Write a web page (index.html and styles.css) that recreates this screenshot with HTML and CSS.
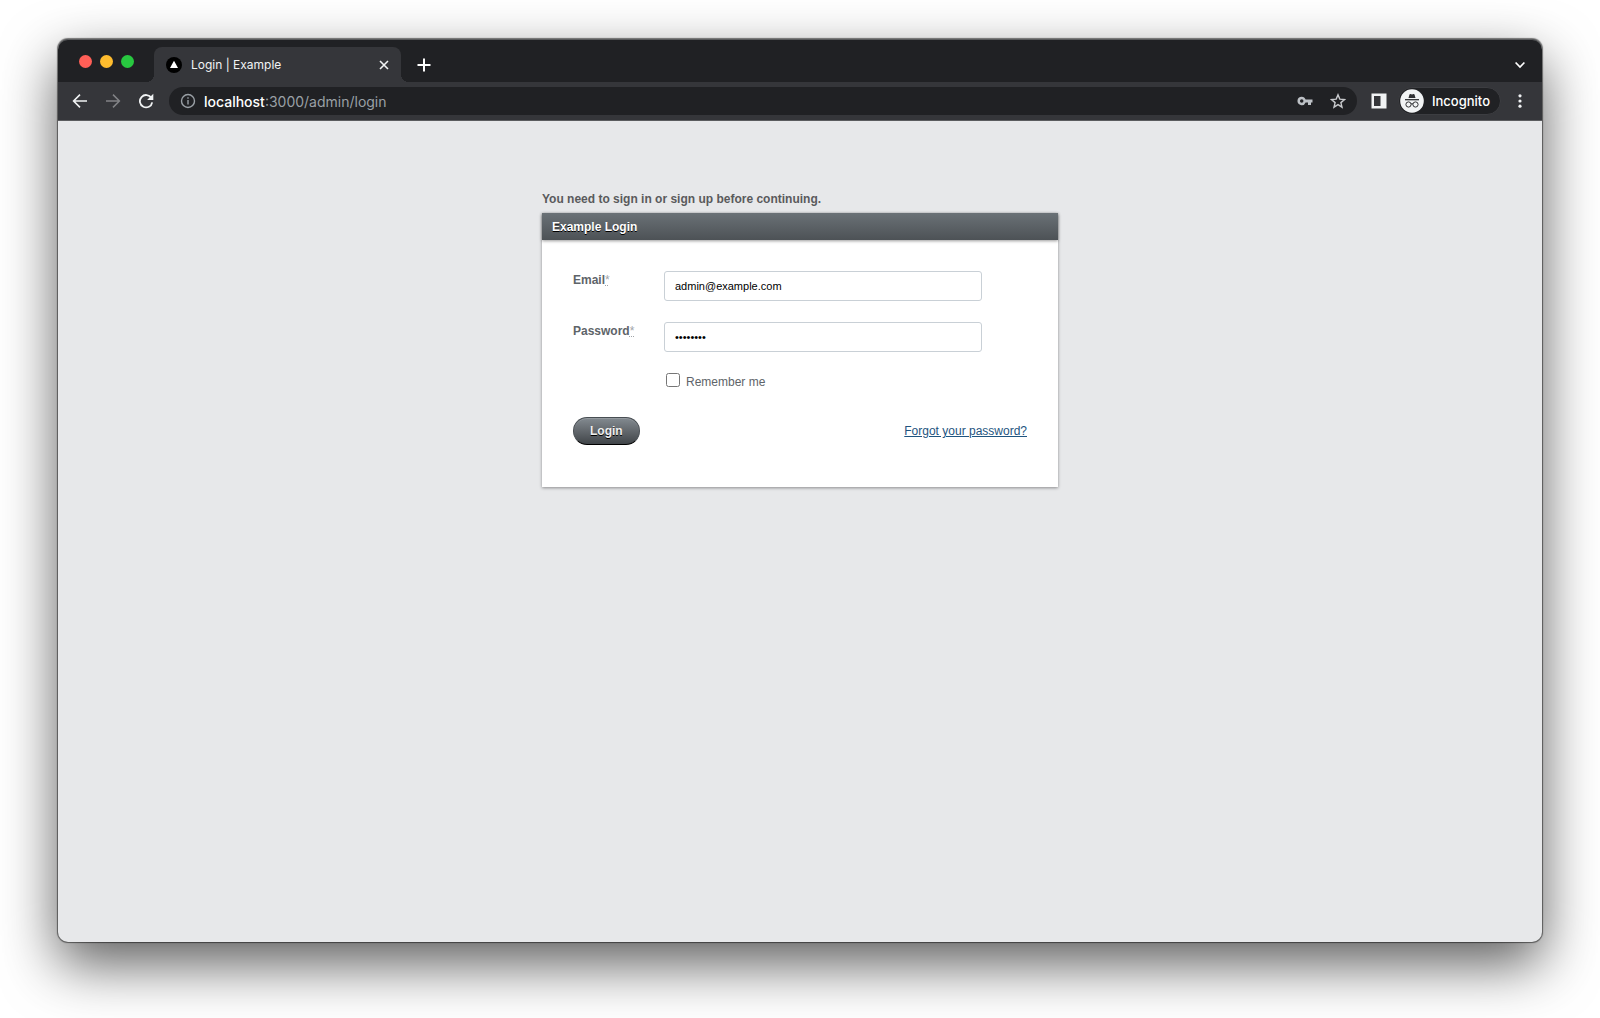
FILE: index.html
```html
<!DOCTYPE html>
<html lang="en">
<head>
<meta charset="utf-8">
<title>Login | Example</title>
<link rel="stylesheet" href="styles.css">
</head>
<body>
<div class="window">
  <header class="chrome">
    <div class="tabstrip">
      <div class="lights">
        <span class="light light-close"></span>
        <span class="light light-minimize"></span>
        <span class="light light-zoom"></span>
      </div>
      <div class="tab">
        <svg class="favicon" width="16" height="16" viewBox="0 0 16 16"><circle cx="8" cy="8" r="8" fill="#000"/><path d="M8 3.8 12 11H4z" fill="#fff"/></svg>
        <span class="tab-title">Login | Example</span>
        <button class="icon-button" type="button" aria-label="Close tab">
          <svg width="10" height="10" viewBox="0 0 10 10" fill="none" stroke="#f1f3f4" stroke-width="1.6"><path d="M1 1l8 8M9 1l-8 8"/></svg>
        </button>
      </div>
      <button class="icon-button new-tab" type="button" aria-label="New tab">
        <svg width="14" height="14" viewBox="0 0 14 14" fill="none" stroke="#fff" stroke-width="2"><path d="M7 .5v13M.5 7h13"/></svg>
      </button>
      <button class="icon-button tab-search" type="button" aria-label="Search tabs">
        <svg width="12" height="8" viewBox="0 0 12 8" fill="none" stroke="#fff" stroke-width="1.7"><path d="M1.6 1.5 6 6l4.4-4.5"/></svg>
      </button>
    </div>
    <div class="toolbar">
      <nav class="nav-buttons">
        <button class="icon-button" type="button" aria-label="Back">
          <svg width="16" height="16" viewBox="0 0 16 16" fill="none" stroke="#f1f3f4" stroke-width="1.6"><path d="M15 8H2M8 1.6 1.6 8 8 14.4"/></svg>
        </button>
        <button class="icon-button" type="button" aria-label="Forward">
          <svg width="16" height="16" viewBox="0 0 16 16" fill="none" stroke="#828386" stroke-width="1.5"><path d="M1 8h13M8 1.6 14.4 8 8 14.4"/></svg>
        </button>
        <button class="icon-button" type="button" aria-label="Reload">
          <svg width="16" height="16" viewBox="0 0 16 16"><path d="M13.4 5A6.2 6.2 0 1 0 14.2 9.3" fill="none" stroke="#f1f3f4" stroke-width="1.8"/><path d="M15.3.8V7H9.100z" fill="#f1f3f4"/></svg>
        </button>
      </nav>
      <div class="omnibox">
        <svg width="16" height="16" viewBox="0 0 16 16" fill="none" stroke="#9aa0a6" stroke-width="1.4"><circle cx="8" cy="8" r="6.5"/><path d="M8 7v4.600M8 4.300v1.500"/></svg>
        <span class="url"><span class="url-host">localhost</span>:3000/admin/login</span>
        <svg class="key" width="16" height="16" viewBox="0 0 16 16"><path fill="#bdc1c6" fill-rule="evenodd" d="M4.700 3.700a4.200 4.200 0 1 0 3.900 5.700H11V12h3V9.400h1.500V6.600H8.600A4.200 4.200 0 0 0 4.700 3.700zm0 2.500a1.750 1.750 0 1 1 0 3.500 1.750 1.750 0 0 1 0-3.500z"/></svg>
        <svg width="16" height="16" viewBox="0 0 16 16" fill="none" stroke="#c8cacd" stroke-width="1.4"><path d="M8 1.800l1.800 4.300 4.700.4-3.600 3.100 1.100 4.600L8 11.700l-4 2.500 1.100-4.600L1.500 6.500l4.700-.4z"/></svg>
      </div>
      <button class="icon-button" type="button" aria-label="Side panel">
        <svg width="16" height="16" viewBox="0 0 16 16"><path fill="#f1f3f4" fill-rule="evenodd" d="M.5.5h15v15H.5zM3 3v10h6.500V3z"/></svg>
      </button>
      <button class="profile" type="button">
        <svg width="24" height="24" viewBox="0 0 24 24"><circle cx="12" cy="12" r="11.800" fill="#f1f3f4"/><path d="M8.500 9 9.400 5.700Q9.700 4.900 10.500 5.100L12 5.500l1.500-.4q.8-.2 1.100.6L15.500 9z" fill="#303134"/><path d="M5 10.700h14" stroke="#303134" stroke-width="1.300"/><g fill="none" stroke="#303134"><circle cx="8.500" cy="15.500" r="2.600"/><circle cx="15.500" cy="15.500" r="2.600"/><path d="M11 15q1-.7 2 0"/></g></svg>
        <span>Incognito</span>
      </button>
      <button class="icon-button menu" type="button" aria-label="Menu">
        <svg width="4" height="16" viewBox="0 0 4 16" fill="#f1f3f4"><circle cx="2" cy="2.800" r="1.600"/><circle cx="2" cy="8" r="1.600"/><circle cx="2" cy="13.200" r="1.600"/></svg>
      </button>
    </div>
  </header>
  <main class="page">
    <div class="login">
      <p class="flash">You need to sign in or sign up before continuing.</p>
      <section class="panel">
        <h2 class="panel-title">Example Login</h2>
        <form class="form">
          <div class="field">
            <label for="email">Email<abbr title="required">*</abbr></label>
            <input id="email" type="email" value="admin@example.com">
          </div>
          <div class="field">
            <label for="password">Password<abbr title="required">*</abbr></label>
            <input id="password" type="password" value="password">
          </div>
          <div class="remember">
            <input id="remember" type="checkbox">
            <label for="remember">Remember me</label>
          </div>
          <div class="actions">
            <button class="submit" type="submit">Login</button>
            <a class="forgot" href="#">Forgot your password?</a>
          </div>
        </form>
      </section>
    </div>
  </main>
</div>
</body>
</html>
```
FILE: styles.css
```css
* {
  box-sizing: border-box;
}

body {
  margin: 0;
  min-height: 100vh;
  display: flex;
  padding: 39px 58px 76px;
  background: #fff;
  overflow: hidden;
}

svg {
  display: block;
  flex: none;
}

.window {
  flex: 1;
  display: flex;
  flex-direction: column;
  border-radius: 10px;
  background: #e7e8ea;
  box-shadow: 0 0 1px 1px rgba(0, 0, 0, 0.5), 0 22px 56px rgba(0, 0, 0, 0.64);
}

.chrome {
  border-radius: 10px 10px 0 0;
  background: #202124;
  box-shadow: inset 0 1px #5a5b5d;
  color: #f1f3f4;
  font-family: Inter, sans-serif;
}

.icon-button {
  display: flex;
  align-items: center;
  justify-content: center;
  padding: 0;
  border: 0;
  background: none;
}

.tabstrip {
  display: flex;
  align-items: center;
  height: 43px;
  padding: 8px 16px 0 21px;
}

.lights {
  display: flex;
  gap: 8px;
  padding-bottom: 6px;
}

.light {
  width: 13px;
  height: 13px;
  border-radius: 50%;
}

.light-close {
  background: #ff5f57;
}

.light-minimize {
  background: #febc2e;
}

.light-zoom {
  background: #28c840;
}

.tab {
  position: relative;
  display: flex;
  align-items: center;
  gap: 9px;
  width: 247px;
  height: 35px;
  margin-left: 20px;
  padding: 0 12px;
  border-radius: 8px 8px 0 0;
  background: #35363a;
}

.tab::before,
.tab::after {
  content: "";
  position: absolute;
  bottom: 0;
  width: 8px;
  height: 8px;
}

.tab::before {
  right: 100%;
  background: radial-gradient(circle at 0 0, transparent 8px, #35363a 8px);
}

.tab::after {
  left: 100%;
  background: radial-gradient(circle at 100% 0, transparent 8px, #35363a 8px);
}

.tab-title {
  flex: 1;
  font-size: 12px;
}

.new-tab {
  margin-left: 16px;
}

.tab-search {
  margin-left: auto;
}

.toolbar {
  display: flex;
  align-items: center;
  height: 39px;
  padding: 0 20px 0 14px;
  background: #35363a;
  border-bottom: 1px solid #5b5c5f;
}

.nav-buttons {
  display: flex;
  gap: 17px;
}

.omnibox {
  flex: 1;
  display: flex;
  align-items: center;
  gap: 8px;
  height: 28px;
  margin: 0 14px 0 15px;
  padding: 0 11px;
  border-radius: 14px;
  background: #202124;
}

.url {
  flex: 1;
  color: #9aa0a6;
  font-size: 14px;
}

.url-host {
  color: #fff;
  font-weight: 500;
}

.key {
  margin-right: 9px;
}

.profile {
  display: flex;
  align-items: center;
  gap: 8px;
  height: 28px;
  margin: 0 17px 0 11px;
  padding: 0 10px 0 1px;
  border: 1px solid #3c3d41;
  border-radius: 14px;
  background: #202124;
  color: #fff;
  font: 500 13px Inter, sans-serif;
}

.page {
  flex: 1;
  padding: 69px 20px;
  color: #5e6469;
  font: 12px/18px "Liberation Sans", Arial, sans-serif;
}

.login {
  width: 516px;
  max-width: 100%;
  margin: 0 auto;
}

.flash {
  margin: 0 0 5px;
  font-weight: bold;
  color: #5a5a5c;
}

.panel {
  background: #fff;
  box-shadow: 0 1px 3px rgba(0, 0, 0, 0.4);
}

.panel-title {
  margin: 0;
  padding: 5px 10px 4px;
  background: linear-gradient(#6a7176, #4d5256);
  box-shadow: 0 1px 3px rgba(0, 0, 0, 0.4);
  color: #fff;
  font-size: 12px;
  line-height: 18px;
  text-shadow: 0 1px #000;
}

.form {
  padding: 31px 31px 42px;
}

.field {
  display: flex;
  align-items: flex-start;
  margin-bottom: 21px;
}

.field label {
  width: 91px;
  font-weight: bold;
}

.field abbr {
  color: #a0a4a8;
  font-weight: normal;
  text-decoration: underline dotted;
}

.field input {
  width: 318px;
  height: 30px;
  padding: 0 10px;
  border: 1px solid #c9d0d6;
  border-radius: 3px;
  background: #fff;
  color: #000;
  font: 11px "Liberation Sans", Arial, sans-serif;
}

.remember {
  display: flex;
  align-items: center;
  gap: 6px;
  padding-left: 93px;
}

.remember input {
  width: 14px;
  height: 14px;
  margin: 0 0 4px;
}

.actions {
  display: flex;
  align-items: center;
  justify-content: space-between;
  margin-top: 26px;
}

.submit {
  height: 28px;
  padding: 0 16px;
  border: 1px solid #484e53;
  border-bottom-color: #000;
  border-radius: 14px;
  background: linear-gradient(#838a90, #414549);
  box-shadow: inset 0 1px rgba(255, 255, 255, 0.15);
  color: #efefef;
  font: bold 12px "Liberation Sans", Arial, sans-serif;
  text-shadow: 0 1px #000;
}

.forgot {
  color: #1e5480;
}
```
